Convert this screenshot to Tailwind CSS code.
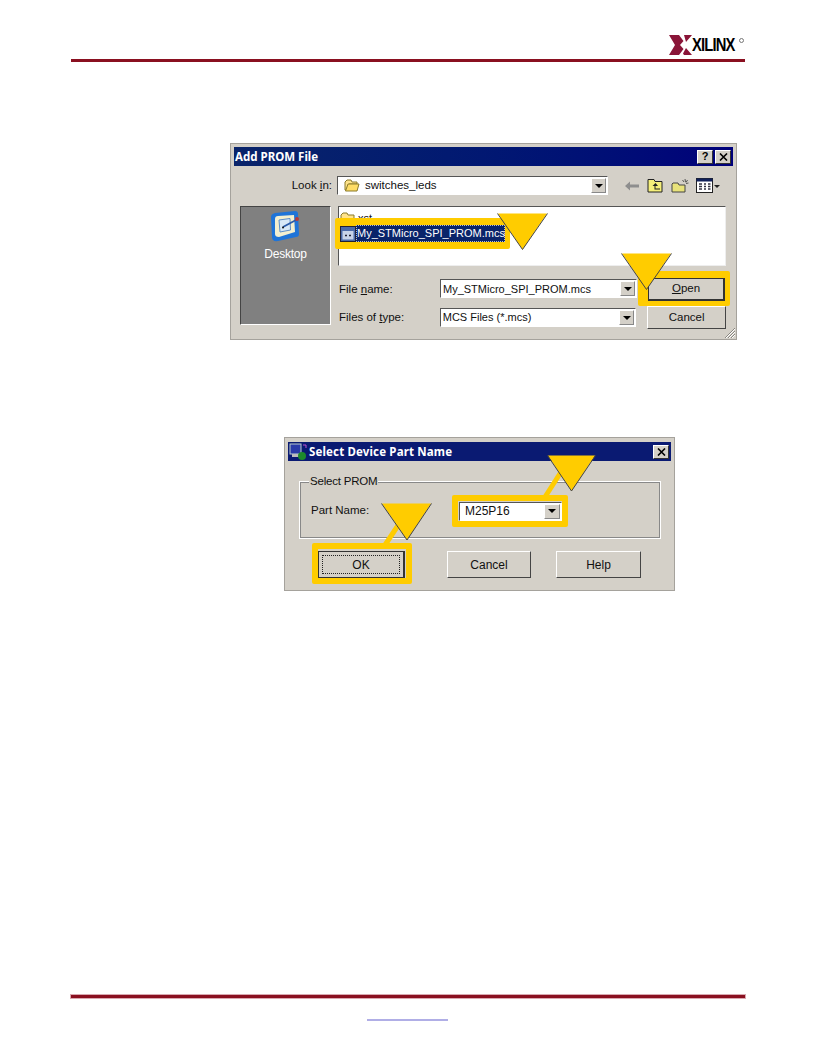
<!DOCTYPE html>
<html><head><meta charset="utf-8"><script src="https://cdn.jsdelivr.net/npm/@tailwindcss/browser@4"></script></head>
<body class="bg-white font-['Liberation_Sans',sans-serif] text-[11px] text-[#111]">
<div class="relative w-[816px] h-[1056px] overflow-hidden flex flex-col">
  <header class="h-[59px] mx-[71px] flex items-start justify-end pt-[35px] pr-[1px] shrink-0">
    <svg width="23" height="20" viewBox="0 0 23 20"><path d="M0 0H10L14.500 6L11 10L14.500 14L10 20H0L6 10Z" fill="#8a1538"/><path d="M15 0H23L17 7ZM17 13L23 20H15L14 18.500Z" fill="#8a1538"/></svg>
    <span class="text-[18px] leading-[20px] font-bold text-black tracking-[-1px] scale-x-[.82] origin-left w-[47px] whitespace-nowrap">XILINX</span>
    <span class="block w-[5px] h-[5px] mt-[3px] rounded-full border border-[#777]"></span>
  </header>
  <div class="mx-[71px] h-[3px] bg-[#8a1020] shrink-0"></div>

  <main class="relative flex-1 flex flex-col">
    <!-- Add PROM File -->
    <section class="relative ml-[230px] mt-[81px] w-[507px] h-[197px] bg-[#d4d0c8] border border-[#a5a29c] px-[3px] pt-[3px]">
      <div class="h-[19px] flex items-center justify-between bg-gradient-to-r from-[#0a246a] to-[#00007a] pl-[1px] pr-[2px]">
        <span class="text-white font-bold text-[11.500px] font-['Noto_Sans',sans-serif]">Add PROM File</span>
        <div class="flex gap-[2px]">
          <span class="w-[16px] h-[14px] bg-[#d4d0c8] border-r border-b border-[#333] border-t-white border-l-white border-t border-l flex items-center justify-center font-bold text-[11px] text-black">?</span>
          <span class="w-[16px] h-[14px] bg-[#d4d0c8] border-r border-b border-[#333] border-t-white border-l-white border-t border-l flex items-center justify-center"><svg width="9" height="8" viewBox="0 0 9 8"><path d="M1 0.500L8 7.500M8 0.500L1 7.500" stroke="#000" stroke-width="1.600"/></svg></span>
        </div>
      </div>

      <div class="h-[19px] mt-[10px] flex items-center">
        <span class="w-[103px] text-right text-[11.500px] pr-[5px]">Look <u>i</u>n:</span>
        <div class="w-[271px] h-[19px] bg-white border border-[#555] border-r-white border-b-white flex items-center pl-[6px] text-[11.500px] relative">
          <svg width="16" height="13" viewBox="0 0 16 13" class="mr-[5px]"><path d="M1 3L3 1H7L8 3H13V5H5L4 11H1Z" fill="#ffe38a" stroke="#8a7a2a"/><path d="M4 5H15L13 12H1.500Z" fill="#ffdd66" stroke="#8a7a2a"/></svg>
          switches_leds
          <span class="absolute right-[1px] top-[1px] w-[15px] h-[15px] bg-[#d4d0c8] border border-[#888] border-t-white border-l-white flex items-center justify-center"><span class="border-x-[4px] border-t-[4px] border-x-transparent border-t-black"></span></span>
        </div>
        <div class="ml-[17px] flex items-center gap-[7px]">
          <svg width="15" height="10" viewBox="0 0 15 10"><path d="M0 5L5 0.500V3.500H14V6.500H5V9.500Z" fill="#8e8e8e"/></svg>
          <svg width="17" height="15" viewBox="0 0 17 15"><path d="M1 14V1.500H7L8 3.500H15V14Z" fill="#f5ef7a" stroke="#222"/><path d="M8.500 5L5.500 8H7.500V11.500H13V10.500H8.500V8H11Z" fill="#222"/></svg>
          <svg width="18" height="15" viewBox="0 0 18 15"><path d="M1 14V6L2 5H7L8 7H14V14Z" fill="#e8e27a" stroke="#444"/><path d="M14 1L14.500 4M16.500 2L15 4.500M17.500 5L15 5.500M11.500 2L13 4" stroke="#555"/></svg>
          <svg width="25" height="15" viewBox="0 0 25 15"><rect x="0.500" y="0.500" width="16" height="14" fill="#fff" stroke="#222"/><rect x="0.500" y="0.500" width="16" height="3" fill="#10205a"/><path d="M3 6H6M3 8.500H6M3 11H6M8 6H10M8 8.500H10M8 11H10M12 6H14.500M12 8.500H14.500M12 11H14.500" stroke="#334" stroke-width="1.400"/><path d="M18 7H24L21 10Z" fill="#222"/></svg>
        </div>
      </div>

      <div class="flex mt-[11px]">
        <aside class="w-[91px] h-[119px] ml-[6px] bg-[#808080] border border-[#444] border-r-white border-b-white flex flex-col items-center pt-[3px] text-white text-[12px]">
          <svg width="33" height="33" viewBox="0 0 33 33"><path d="M6 3L26 1Q29 1 29 4L30 24Q30 27 27 27L9 31Q3 32 3 27L2 7Q2 4 6 3Z" fill="#1f74d8"/><path d="M6 9Q6 6 9 6L25 5L26 22L10 27Q6 27 6 24Z" fill="#f3efd0"/><path d="M10 10L21 8.500L21.500 20L11 22Z" fill="#d8e8f6" stroke="#5b8dc8"/><path d="M14 17L27 10" stroke="#2a5aa8" stroke-width="1.800"/><circle cx="14" cy="17.500" r="1" fill="#111"/><circle cx="28" cy="9" r="2" fill="#b83a3a"/></svg>
          <span class="mt-[2px] tracking-[-0.2px]">Desktop</span>
        </aside>
        <div class="ml-[7px] flex-1 w-[389px] pr-[7px]">
          <div class="relative h-[60px] bg-white border border-[#555] border-r-[#eee] border-b-[#eee] pl-[1px] pt-[5px] overflow-hidden">
            <div class="flex items-center h-[13px] gap-[2px]"><svg width="16" height="13" viewBox="0 0 16 13"><path d="M1 3L3 1H7L8 3H14V12H1Z" fill="#ffe38a" stroke="#8a7a2a"/></svg>xst</div>
          </div>
          <div class="flex items-center mt-[13px] h-[19px]">
            <span class="w-[102px] text-[11.500px] pl-[1px] pt-[2px]">File <u>n</u>ame:</span>
            <div class="w-[197px] h-[19px] bg-white border border-[#555] border-r-white border-b-white flex items-center pl-[2px] pt-[1px] text-[11px] relative">My_STMicro_SPI_PROM.mcs
              <span class="absolute right-[1px] top-[1px] w-[15px] h-[15px] bg-[#d4d0c8] border border-[#888] border-t-white border-l-white flex items-center justify-center"><span class="border-x-[4px] border-t-[4px] border-x-transparent border-t-black"></span></span>
            </div>
            <button class="ml-[11px] mt-[2px] w-[77px] h-[23px] bg-[#d4d0c8] border border-[#333] border-r-2 border-b-2 text-[11.500px] text-center"><u>O</u>pen</button>
          </div>
          <div class="flex items-center mt-[10px] h-[19px]">
            <span class="w-[102px] text-[11.500px] pl-[1px]">Files of <u>t</u>ype:</span>
            <div class="w-[197px] h-[19px] bg-white border border-[#555] border-r-white border-b-white flex items-center pl-[2px] text-[11px] relative">MCS Files (*.mcs)
              <span class="absolute right-[1px] top-[1px] w-[15px] h-[15px] bg-[#d4d0c8] border border-[#888] border-t-white border-l-white flex items-center justify-center"><span class="border-x-[4px] border-t-[4px] border-x-transparent border-t-black"></span></span>
            </div>
            <button class="ml-[11px] w-[79px] h-[23px] bg-[#d4d0c8] border border-white border-r-[#444] border-b-[#444] text-[11.500px] text-center">Cancel</button>
          </div>
        </div>
      </div>

      <!-- callouts over the dialog -->
      <div class="absolute left-[104px] top-[74px] w-[175px] h-[31px] bg-[#ffcc00] rounded-[2px] flex items-center pl-[5px] pr-[5px]">
        <svg width="16" height="16" viewBox="0 0 16 16" class="shrink-0"><rect x="0.500" y="0.500" width="15" height="15" fill="#4a6aa8" stroke="#223"/><rect x="2.500" y="5" width="11" height="8.500" fill="#c8d4e8"/><path d="M5 9.500H7M9 9.500H11" stroke="#223" stroke-width="1.500"/></svg>
        <span class="flex-1 h-[17px] leading-[16px] bg-[#0a246a] text-white text-[11px] outline-dotted outline-1 outline-white/70 -outline-offset-1 pl-[1px] whitespace-nowrap overflow-hidden">My_STMicro_SPI_PROM.mcs</span>
      </div>
      <div class="absolute left-[407px] top-[127px] w-[92px] h-[35px] border-[#ffcc00] border-l-[10px] border-t-[7px] border-r-[5px] border-b-[5px] rounded-[2px]"></div>
      <svg class="absolute left-[266px] top-[69px]" width="51" height="38" viewBox="0 0 51 38"><path d="M1 0.500H50L25.500 36.500Z" fill="#ffcc00"/><path d="M0.500 0.500L25.500 36.500L50.500 0.500" fill="none" stroke="#444" stroke-width="1"/></svg>
      <svg class="absolute left-[390px] top-[109px]" width="51" height="38" viewBox="0 0 51 38"><path d="M1 0.500H50L25.500 36.500Z" fill="#ffcc00"/><path d="M0.500 0.500L25.500 36.500L50.500 0.500" fill="none" stroke="#444" stroke-width="1"/></svg>
      <svg class="absolute right-[0px] bottom-[0px]" width="12" height="12" viewBox="0 0 12 12"><path d="M11 1L1 11M11 4L4 11M11 7L7 11" stroke="#8a8780"/><path d="M11 2L2 11M11 5L5 11M11 8L8 11" stroke="#fff"/></svg>
    </section>

    <!-- Select Device Part Name -->
    <section class="relative ml-[284px] mt-[97px] w-[391px] h-[154px] bg-[#d4d0c8] border border-[#a5a29c] px-[3px] pt-[4px]">
      <div class="h-[19px] flex items-center justify-between bg-[#0a1a72] pl-[1px] pr-[2px]">
        <span class="flex items-center text-white font-bold text-[11.500px] tracking-[0.15px] font-['Noto_Sans',sans-serif]">
          <svg width="19" height="18" viewBox="0 0 19 18" class="mr-[1px]"><rect x="1" y="1" width="11" height="10" fill="#2a3aa8" stroke="#bcc"/><rect x="3" y="11" width="9" height="3" fill="#bbb"/><circle cx="13" cy="13" r="4" fill="#1d8a2c"/><path d="M14 2H17V5" stroke="#c050d0" fill="none"/></svg>Select Device Part Name</span>
        <span class="w-[16px] h-[14px] bg-[#d4d0c8] border-r border-b border-[#333] border-t-white border-l-white border-t border-l flex items-center justify-center"><svg width="9" height="8" viewBox="0 0 9 8"><path d="M1 0.500L8 7.500M8 0.500L1 7.500" stroke="#000" stroke-width="1.600"/></svg></span>
      </div>

      <fieldset class="mt-[20px] ml-[11px] w-[362px] h-[58px] border border-[#fff] outline outline-1 outline-[#888] -outline-offset-2 relative">
        <span class="absolute left-[9px] top-[-8px] bg-[#d4d0c8] px-[1px] text-[11.500px] tracking-[-0.2px] leading-[14px]">Select PROM</span>
        <div class="flex items-center h-full pt-[2px]">
          <span class="ml-[11px] w-[148px] text-[11.500px]">Part Name:</span>
          <div class="relative w-[103px] h-[19px] bg-white border border-[#555] border-r-white border-b-white flex items-center pl-[5px] text-[12px]">M25P16
            <span class="absolute right-[1px] top-[1px] w-[16px] h-[15px] bg-[#d4d0c8] border border-[#888] border-t-white border-l-white flex items-center justify-center"><span class="border-x-[4px] border-t-[4px] border-x-transparent border-t-black"></span></span>
          </div>
        </div>
      </fieldset>

      <div class="flex mt-[12px] ml-[30px]">
        <button class="relative w-[87px] h-[28px] bg-[#d4d0c8] border border-[#333] border-r-2 border-b-2 text-[12px]"><span class="absolute inset-[3px] border border-dotted border-[#222] flex items-center justify-center">OK</span></button>
        <button class="ml-[42px] w-[84px] h-[27px] bg-[#d4d0c8] border border-white border-r-[#444] border-b-[#444] text-[12px]">Cancel</button>
        <button class="ml-[25px] w-[85px] h-[27px] bg-[#d4d0c8] border border-white border-r-[#444] border-b-[#444] text-[12px]">Help</button>
      </div>

      <div class="absolute left-[167px] top-[57px] w-[116px] h-[32px] border-[6px] border-[#ffcc00] rounded-[2px]"></div>
      <div class="absolute left-[27px] top-[105px] w-[100px] h-[41px] border-[6px] border-[#ffcc00] rounded-[2px]"></div>
      <svg class="absolute left-[0px] top-[0px] pointer-events-none" width="391" height="154" viewBox="0 0 391 154">
        <path d="M260 59L276 34" stroke="#ffcc00" stroke-width="5"/>
        <path d="M100 107L114 86" stroke="#ffcc00" stroke-width="5"/>
        <path d="M263 17.500H310L286.500 53Z" fill="#ffcc00"/>
        <path d="M262.500 17.500L286.500 53L310.500 17.500" fill="none" stroke="#444"/>
        <path d="M97 65.500H146L122 102Z" fill="#ffcc00"/>
        <path d="M96.500 65.500L122 102L146.500 65.500" fill="none" stroke="#444"/>
      </svg>
    </section>

    <div class="mx-[71px] mt-auto h-[3px] bg-[#8a1020] ring-1 ring-[#d9a8b0]"></div>
    <footer class="h-[58px] flex justify-start pl-[367px] pt-[21px]"><span class="block w-[81px] h-[2px] bg-[#b0aee6]"></span></footer>
  </main>
</div>
</body></html>
